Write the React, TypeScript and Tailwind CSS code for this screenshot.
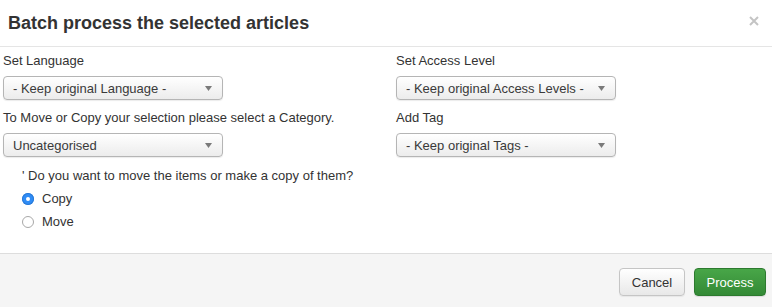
import React from "react";

function Select({ text }: { text: string }) {
  return (
    <div className="flex h-[24px] w-[220px] items-center justify-between rounded-[4px] border border-[#b5b5b5] bg-gradient-to-b from-white to-[#ececec] pl-[9px] pr-[10px] text-[13px] text-[#3a3a3a] shadow-[0_1px_1px_rgba(0,0,0,0.08)]">
      <span className="leading-none">{text}</span>
      <svg width="7" height="5" viewBox="0 0 7 5">
        <path d="M0 0 L7 0 L3.5 5 Z" fill="#7a7a7a" />
      </svg>
    </div>
  );
}

function Label({ children }: { children: React.ReactNode }) {
  return <div className="h-[18px] text-[13px] leading-[18px] text-[#333]">{children}</div>;
}

export default function App() {
  return (
    <div
      className="flex h-[307px] w-[772px] flex-col bg-white"
      style={{ fontFamily: '"Liberation Sans", Arial, sans-serif' }}
    >
      <div className="flex h-[47px] shrink-0 items-center justify-between border-b border-[#e5e5e5] pl-[8px] pr-[13px]">
        <h3 className="text-[18px] font-bold leading-[22px] text-[#333]">Batch process the selected articles</h3>
        <svg width="10" height="10" viewBox="0 0 10 10" className="mb-[4px]">
          <path d="M1 1 L9 9 M9 1 L1 9" stroke="#c4c4c4" strokeWidth="2" />
        </svg>
      </div>
      <div className="flex flex-1 pl-[3px] pt-[5px]">
        <div className="flex w-[393px] flex-col">
          <Label>Set Language</Label>
          <div className="mt-[6px]">
            <Select text="- Keep original Language -" />
          </div>
          <div className="mt-[9px]">
            <Label>To Move or Copy your selection please select a Category.</Label>
          </div>
          <div className="mt-[6px]">
            <Select text="Uncategorised" />
          </div>
          <div className="mt-[10px] pl-[19px]">
            <Label>' Do you want to move the items or make a copy of them?</Label>
            <div className="mt-[5px] flex h-[18px] items-center gap-[8px]">
              <span className="flex h-[12px] w-[12px] items-center justify-center rounded-full bg-[#2f8cf6] shadow-[inset_0_0_0_1px_#2a7ad6]">
                <span className="h-[4px] w-[4px] rounded-full bg-white" />
              </span>
              <span className="text-[13px] leading-[18px] text-[#333]">Copy</span>
            </div>
            <div className="mt-[5px] flex h-[18px] items-center gap-[8px]">
              <span className="h-[12px] w-[12px] rounded-full border border-[#a8a8a8] bg-white" />
              <span className="text-[13px] leading-[18px] text-[#333]">Move</span>
            </div>
          </div>
        </div>
        <div className="flex flex-col">
          <Label>Set Access Level</Label>
          <div className="mt-[6px]">
            <Select text="- Keep original Access Levels -" />
          </div>
          <div className="mt-[9px]">
            <Label>Add Tag</Label>
          </div>
          <div className="mt-[6px]">
            <Select text="- Keep original Tags -" />
          </div>
        </div>
      </div>
      <div className="flex h-[54px] shrink-0 items-start justify-end gap-[9px] border-t border-[#dddddd] bg-[#f5f5f5] pr-[6px] pt-[14px]">
        <button className="h-[28px] w-[66px] rounded-[4px] border border-[#c5c5c5] bg-gradient-to-b from-white to-[#e8e8e8] pt-[1px] text-[13px] text-[#333] shadow-[0_1px_1px_rgba(0,0,0,0.06)]">
          Cancel
        </button>
        <button className="h-[28px] w-[72px] rounded-[4px] border border-[#2d7a2f] bg-gradient-to-b from-[#48a648] to-[#348a36] pt-[1px] text-[13px] text-white shadow-[0_1px_1px_rgba(0,0,0,0.1)]">
          Process
        </button>
      </div>
    </div>
  );
}
